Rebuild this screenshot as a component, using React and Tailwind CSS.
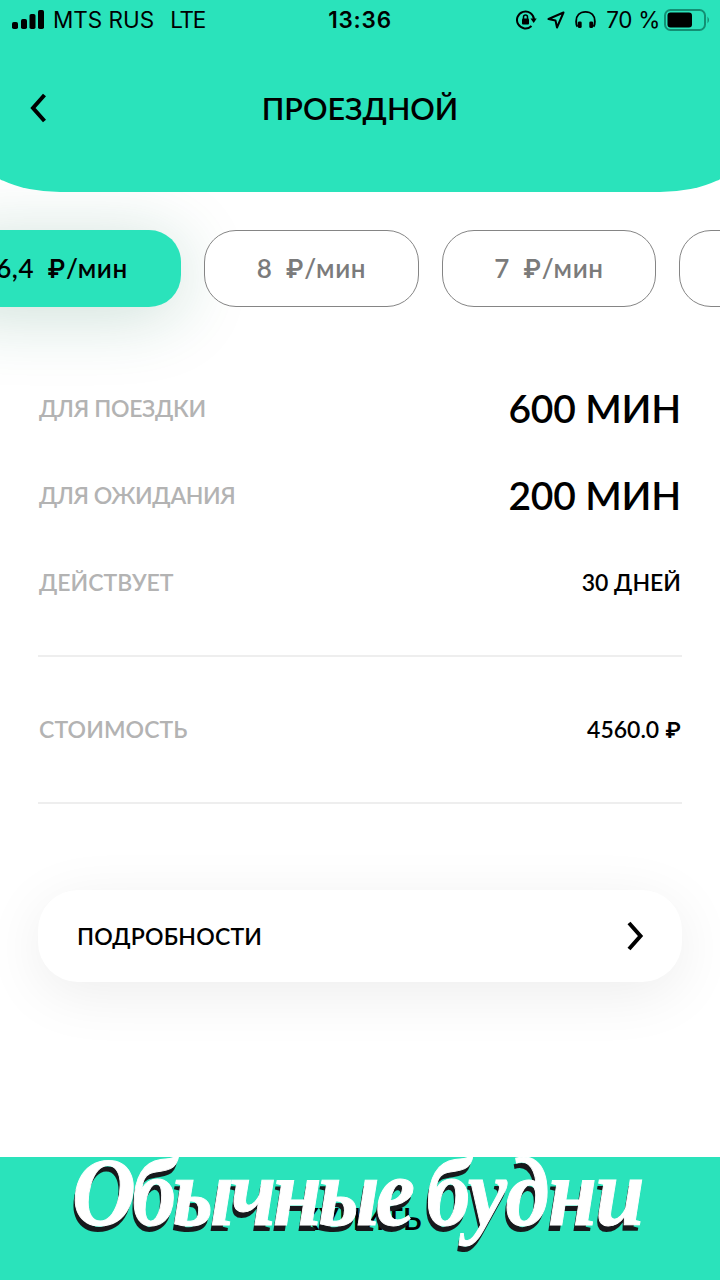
const tariffs = [
  { price: '6,4', active: true, width: 'w-[238px] -ml-[57px]' },
  { price: '8', width: 'w-[215px]' },
  { price: '7', width: 'w-[214px]' },
  { price: '6', width: 'w-[214px]' },
];

const rows = [
  { label: 'ДЛЯ ПОЕЗДКИ', value: '600 МИН', labelStyle: 'tracking-[-0.3px]', style: 'text-[39px] tracking-[-0.2px]' },
  { label: 'ДЛЯ ОЖИДАНИЯ', value: '200 МИН', labelStyle: 'tracking-[-0.4px]', style: 'text-[39px] tracking-[-0.2px]' },
  { label: 'ДЕЙСТВУЕТ', value: '30 ДНЕЙ', labelStyle: 'tracking-[0px]', style: 'text-[23px]' },
];

function Ruble() {
  return <span className="font-[Inter,sans-serif] text-[0.96em] font-semibold">₽</span>;
}

function StatusBar() {
  return (
    <div className="flex h-10 items-center justify-between pl-3 pr-[10px] font-[Inter,sans-serif] text-[22.5px] font-normal leading-none">
      <div className="flex w-[240px] items-center">
        <svg width="32" height="20" viewBox="0 0 32 20" className="mr-[9px]">
          <rect x="0" y="12" width="6" height="7" rx="1.8" />
          <rect x="9" y="9" width="6" height="10" rx="1.8" />
          <rect x="17.500" y="4" width="6" height="15" rx="1.8" />
          <rect x="26" y="0" width="6" height="19" rx="1.8" />
        </svg>
        <span className="whitespace-nowrap">MTS RUS</span>
        <span className="ml-4 tracking-[-1.3px]">LTE</span>
      </div>
      <span className="relative -left-px font-semibold tracking-[0.8px]">13:36</span>
      <div className="flex w-[240px] items-center justify-end">
        <svg width="21" height="20" viewBox="0 0 21 20" fill="none" stroke="black" strokeWidth="2" className="mr-[10px]">
          <path d="M15.500 16A8.500 8.500 0 1 1 18 9.500" />
          <path d="M14.500 8.500h6.200L17.700 13z" fill="black" stroke="none" />
          <rect x="6" y="8.500" width="7" height="6" rx="1" fill="black" stroke="none" />
          <path d="M7.500 9V7a2 2 0 0 1 4 0v2" strokeWidth="1.500" />
        </svg>
        <svg width="18" height="18" viewBox="0 0 18 18" fill="none" stroke="black" strokeWidth="2" strokeLinejoin="round" className="mr-[10px]">
          <path d="M16.500 1.500L1.500 8l7 1.500 1.500 7z" />
        </svg>
        <svg width="21" height="20" viewBox="0 0 22 20" fill="none" stroke="black" strokeWidth="2" className="mr-[10px]">
          <path d="M2.500 17c-1-1.500-1.300-3.500-1.300-5.500C1.200 5.500 5 1.500 11 1.500s9.800 4 9.800 10c0 2-.3 4-1.300 5.500" />
          <rect x="3" y="11.500" width="4" height="7" rx="1.500" fill="black" stroke="none" />
          <rect x="15" y="11.500" width="4" height="7" rx="1.500" fill="black" stroke="none" />
        </svg>
        <span className="whitespace-nowrap tracking-[-0.3px]">70 %</span>
        <svg width="46" height="22" viewBox="0 0 46 22" className="ml-1 shrink-0">
          <rect x="1" y="1" width="40" height="20" rx="5.500" fill="none" stroke="#138f73" strokeWidth="2" />
          <rect x="3.500" y="3.500" width="24.500" height="15" rx="3" />
          <path d="M43.500 7.500q3 3.500 0 7z" fill="#138f73" />
        </svg>
      </div>
    </div>
  );
}

export default function App() {
  return (
    <div className="flex h-[1280px] w-[720px] flex-col overflow-hidden bg-white font-[Lato,sans-serif] font-medium text-black">
      <header className="relative z-10 h-[192px] shrink-0">
        <div className="absolute inset-x-[-20px] top-0 h-[192px] bg-[#2ae3bb] [border-bottom-left-radius:80px_38px] [border-bottom-right-radius:80px_38px]" />
        <div className="relative">
          <StatusBar />
          <div className="grid h-[136px] grid-cols-[1fr_auto_1fr] items-center px-[30px]">
            <svg width="16" height="30" viewBox="0 0 16 30" fill="none" stroke="black" strokeWidth="4">
              <path d="M14.500 2L3 15l11.500 13" />
            </svg>
            <h1 className="text-[30.5px] font-semibold leading-none">ПРОЕЗДНОЙ</h1>
          </div>
        </div>
      </header>

      <div className="mt-[38px] flex h-[77px] shrink-0 gap-[23px]">
        {tariffs.map((tariff) => (
          <div
            key={tariff.price}
            className={`flex shrink-0 items-center justify-center gap-[13px] rounded-[32px] text-[26px] font-semibold tracking-[0.6px] ${tariff.width} ${
              tariff.active
                ? 'bg-[#2ae3bb] shadow-[0_8px_70px_rgba(20,110,75,0.22)]'
                : 'border border-[#858585] bg-white text-[#7b7b7b]'
            }`}
          >
            <span>{tariff.price}</span>
            <span>
              <Ruble />
              /мин
            </span>
          </div>
        ))}
      </div>

      <main className="px-[38px]">
        <div className="mt-[58px] pl-px pr-px">
          {rows.map((row) => (
            <div key={row.label} className="flex h-[87px] items-center justify-between">
              <span className={`text-[23px] font-semibold text-[#b3b3b3] ${row.labelStyle}`}>{row.label}</span>
              <span className={`font-semibold ${row.style}`}>{row.value}</span>
            </div>
          ))}
        </div>
        <div className="mt-[29px] flex h-[149px] items-center justify-between border-y-2 border-[#eeeeee] px-px">
          <span className="text-[23px] font-semibold tracking-[0.1px] text-[#b3b3b3]">СТОИМОСТЬ</span>
          <span className="text-[23px] font-semibold">
            4560.0 <Ruble />
          </span>
        </div>
        <button className="mt-[86px] flex h-[92px] w-full items-center justify-between rounded-[40px] bg-white pl-[39px] pr-[38px] shadow-[0_12px_60px_rgba(0,0,0,0.075)]">
          <span className="text-[23px] font-semibold tracking-[0.2px]">ПОДРОБНОСТИ</span>
          <svg width="17" height="30" viewBox="0 0 17 30" fill="none" stroke="black" strokeWidth="4">
            <path d="M2 2l11.500 13L2 28" />
          </svg>
        </button>
      </main>

      <footer className="relative mt-auto flex h-[123px] shrink-0 items-center justify-center bg-[#2ae3bb]">
        <span className="text-[30.5px] font-semibold leading-none">КУПИТЬ</span>
        <div className="absolute left-[72px] top-[-14px] origin-left scale-x-[0.9] whitespace-nowrap font-['Liberation_Serif',serif] text-[98px] font-bold italic leading-none text-white [-webkit-text-stroke:1px_white] [text-shadow:-2px_6px_0_#17191c] [word-spacing:-4px]">
          <span className="tracking-[-4px]">Обычные </span>
          <span className="tracking-[-1.4px]">будни</span>
        </div>
      </footer>
    </div>
  );
}
